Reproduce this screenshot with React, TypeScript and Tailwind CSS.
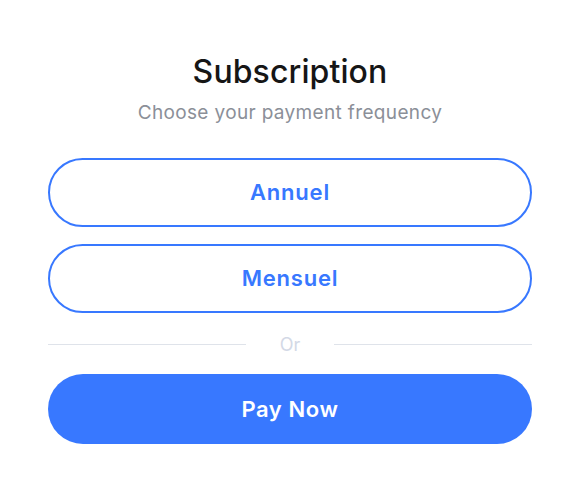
import React from "react";

export default function App() {
  return (
    <div
      className="w-[580px] h-[492px] bg-white flex flex-col px-12 pt-[50px]"
      style={{ fontFamily: "Inter, 'Noto Sans', sans-serif" }}
    >
      <h1 className="text-center text-[32px] leading-[44px] font-medium text-[#161616] tracking-[0.1px]">
        Subscription
      </h1>
      <p className="text-center text-[19px] leading-[26px] text-[#8b8f98] mt-[6px] tracking-[0.35px]">
        Choose your payment frequency
      </p>
      <div className="flex flex-col gap-[17px] mt-[32px]">
        <button className="h-[69px] w-full rounded-full border-2 border-[#3878ff] text-[#3878ff] text-[22px] font-semibold bg-white tracking-[0.8px]">
          Annuel
        </button>
        <button className="h-[69px] w-full rounded-full border-2 border-[#3878ff] text-[#3878ff] text-[22px] font-semibold bg-white tracking-[0.8px]">
          Mensuel
        </button>
      </div>
      <div className="flex items-center mt-[18px] h-[26px]">
        <div className="flex-1 h-px bg-[#dfe3ea]" />
        <span className="w-[88px] text-center text-[18px] text-[#d3d9e6]">Or</span>
        <div className="flex-1 h-px bg-[#dfe3ea]" />
      </div>
      <button className="mt-[17px] h-[70px] w-full rounded-full bg-[#3878ff] text-white text-[22px] font-semibold tracking-[0.6px]">
        Pay Now
      </button>
    </div>
  );
}
